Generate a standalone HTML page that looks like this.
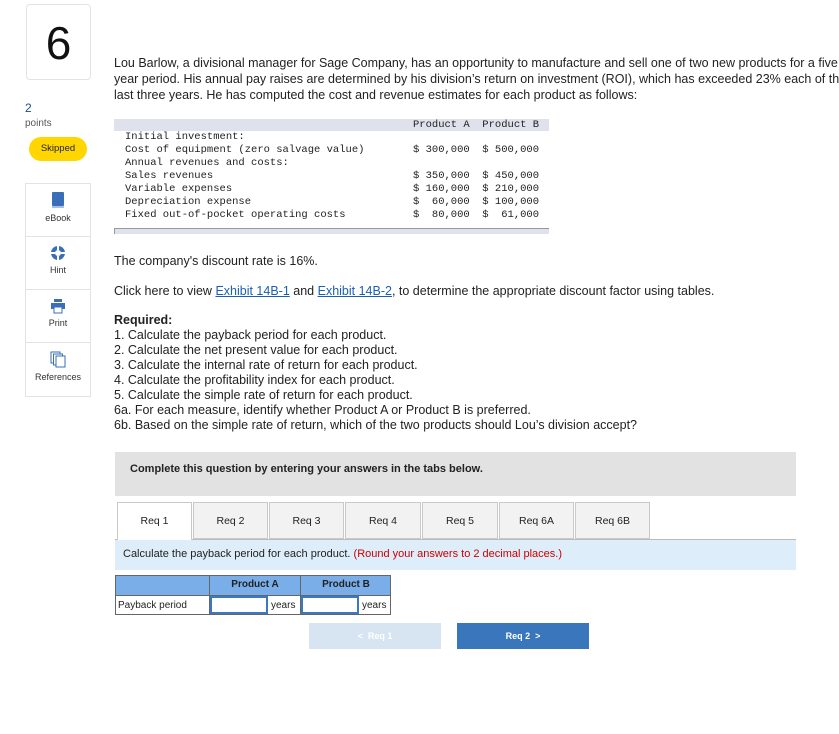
<!DOCTYPE html>
<html><head><meta charset="utf-8"><style>
*{margin:0;padding:0;box-sizing:border-box}
body{width:839px;height:734px;background:#fff;font-family:"Liberation Sans",sans-serif;color:#222;position:relative;overflow:hidden}
.a{position:absolute}
.t{font-size:12.5px;line-height:16px;white-space:nowrap}
.m{font-family:"Liberation Mono",monospace;font-size:10.5px;line-height:13px;white-space:pre;color:#222}
.side{left:25px;width:66px;border:1px solid #e3e3e3;}
.si{height:53px;border-bottom:1px solid #e3e3e3;text-align:center;font-size:9px;color:#333;padding-top:8px}
.si:last-child{border-bottom:none}
.tab{position:absolute;top:502px;height:37px;background:#f2f2f2;border:1px solid #c9c9c9;font-size:10.5px;text-align:center;line-height:36px}
a{color:#1a5fb4;text-decoration:underline}
</style></head><body>
<div class="a" style="left:26px;top:4px;width:65px;height:76px;border:1px solid #e3e3e3;border-radius:4px;text-align:center;font-size:46px;line-height:76px;color:#111">6</div>
<div class="a" style="left:25px;top:101px;font-size:12px;color:#1b4d8e">2</div>
<div class="a" style="left:25px;top:118px;font-size:10px;color:#555">points</div>
<div class="a" style="left:29px;top:137px;width:58px;height:24px;background:#ffd600;border-radius:12px;font-size:9.5px;text-align:center;line-height:24px;color:#222">Skipped</div>
<div class="a side" style="top:183px">
<div class="si"><svg width="14" height="17" viewBox="0 0 14 17"><rect x="1" y="0" width="12" height="14" fill="#3a6fb7" rx="1"/><rect x="1" y="14" width="12" height="2" fill="#a9c0e0"/></svg><div style="margin-top:2px">eBook</div></div>
<div class="si"><svg width="16" height="16" viewBox="0 0 16 16"><circle cx="8" cy="8" r="7" fill="#3a6fb7"/><circle cx="8" cy="8" r="3" fill="#fff"/><path d="M8 1v4M8 11v4M1 8h4M11 8h4" stroke="#fff" stroke-width="2"/></svg><div style="margin-top:2px">Hint</div></div>
<div class="si"><svg width="16" height="16" viewBox="0 0 16 16"><rect x="4" y="1" width="8" height="3" fill="#3a6fb7"/><rect x="1" y="5" width="14" height="6" fill="#3a6fb7"/><rect x="4" y="9" width="8" height="6" fill="#fff" stroke="#3a6fb7"/></svg><div style="margin-top:2px">Print</div></div>
<div class="si"><svg width="16" height="17" viewBox="0 0 16 17"><rect x="1" y="1" width="9" height="11" fill="#fff" stroke="#3a6fb7"/><rect x="3.5" y="3" width="9" height="11" fill="#fff" stroke="#3a6fb7"/><rect x="6" y="5" width="9" height="11" fill="#fff" stroke="#3a6fb7"/></svg><div style="margin-top:2px">References</div></div>
</div>

<div class="a t" style="left:114px;top:55px">Lou Barlow, a divisional manager for Sage Company, has an opportunity to manufacture and sell one of two new products for a five<br>year period. His annual pay raises are determined by his division’s return on investment (ROI), which has exceeded 23% each of the<br>last three years. He has computed the cost and revenue estimates for each product as follows:</div>

<div class="a" style="left:114px;top:119px;width:435px;height:12px;background:#dfe2ec"></div>
<div class="a m" style="left:413px;top:119px">Product A  Product B</div>
<div class="a m" style="left:125px;top:131px">Initial investment:
Cost of equipment (zero salvage value)
Annual revenues and costs:
Sales revenues
Variable expenses
Depreciation expense
Fixed out-of-pocket operating costs</div>
<div class="a m" style="left:413px;top:131px;text-align:right">
$ 300,000  $ 500,000

$ 350,000  $ 450,000
$ 160,000  $ 210,000
$  60,000  $ 100,000
$  80,000  $  61,000</div>
<div class="a" style="left:114px;top:228px;width:435px;height:6px;background:#dfe2ec;border-top:1px solid #999;border-left:1px solid #999"></div>

<div class="a t" style="left:114px;top:253px">The company's discount rate is 16%.</div>
<div class="a t" style="left:114px;top:283px">Click here to view <a>Exhibit 14B-1</a> and <a>Exhibit 14B-2</a>, to determine the appropriate discount factor using tables.</div>
<div class="a t" style="left:114px;top:313px;line-height:15px"><b>Required:</b><br>1. Calculate the payback period for each product.<br>2. Calculate the net present value for each product.<br>3. Calculate the internal rate of return for each product.<br>4. Calculate the profitability index for each product.<br>5. Calculate the simple rate of return for each product.<br>6a. For each measure, identify whether Product A or Product B is preferred.<br>6b. Based on the simple rate of return, which of the two products should Lou’s division accept?</div>

<div class="a" style="left:115px;top:452px;width:681px;height:44px;background:#e2e2e2"></div>
<div class="a" style="left:130px;top:463px;font-weight:bold;font-size:11px">Complete this question by entering your answers in the tabs below.</div>

<div class="a" style="left:115px;top:539px;width:681px;height:1px;background:#bbb"></div>
<div class="tab" style="left:117px;width:75px;background:#fff;border-bottom:none;height:38px">Req 1</div>
<div class="tab" style="left:193px;width:75px">Req 2</div>
<div class="tab" style="left:269px;width:75px">Req 3</div>
<div class="tab" style="left:345px;width:76px">Req 4</div>
<div class="tab" style="left:422px;width:76px">Req 5</div>
<div class="tab" style="left:499px;width:75px">Req 6A</div>
<div class="tab" style="left:575px;width:75px">Req 6B</div>

<div class="a" style="left:115px;top:540px;width:681px;height:30px;background:#ddeefa"></div>
<div class="a" style="left:123px;top:548px;font-size:11px">Calculate the payback period for each product. <span style="color:#c00">(Round your answers to 2 decimal places.)</span></div>

<div class="a" style="left:115px;top:575px;width:276px;height:40px;border:1px solid #666"></div>
<div class="a" style="left:116px;top:576px;width:274px;height:19px;background:#7aaee8"></div>
<div class="a" style="left:115px;top:595px;width:276px;height:1px;background:#666"></div>
<div class="a" style="left:209px;top:575px;width:1px;height:40px;background:#666"></div>
<div class="a" style="left:300px;top:575px;width:1px;height:40px;background:#666"></div>
<div class="a" style="left:210px;top:579px;width:90px;text-align:center;font-size:10px;font-weight:bold">Product A</div>
<div class="a" style="left:301px;top:579px;width:90px;text-align:center;font-size:10px;font-weight:bold">Product B</div>
<div class="a" style="left:118px;top:600px;font-size:10px">Payback period</div>
<div class="a" style="left:210px;top:596px;width:58px;height:18px;border:2px solid #3a78c0"></div>
<div class="a" style="left:271px;top:600px;font-size:10px">years</div>
<div class="a" style="left:301px;top:596px;width:58px;height:18px;border:2px solid #3a78c0"></div>
<div class="a" style="left:362px;top:600px;font-size:10px">years</div>

<div class="a" style="left:309px;top:623px;width:132px;height:26px;background:#d7e4f2;color:#fff;font-size:9px;font-weight:bold;text-align:center;line-height:26px">&lt;&nbsp; Req 1</div>
<div class="a" style="left:457px;top:623px;width:132px;height:26px;background:#3a76bb;color:#fff;font-size:9px;font-weight:bold;text-align:center;line-height:26px">Req 2 &nbsp;&gt;</div>
</body></html>
